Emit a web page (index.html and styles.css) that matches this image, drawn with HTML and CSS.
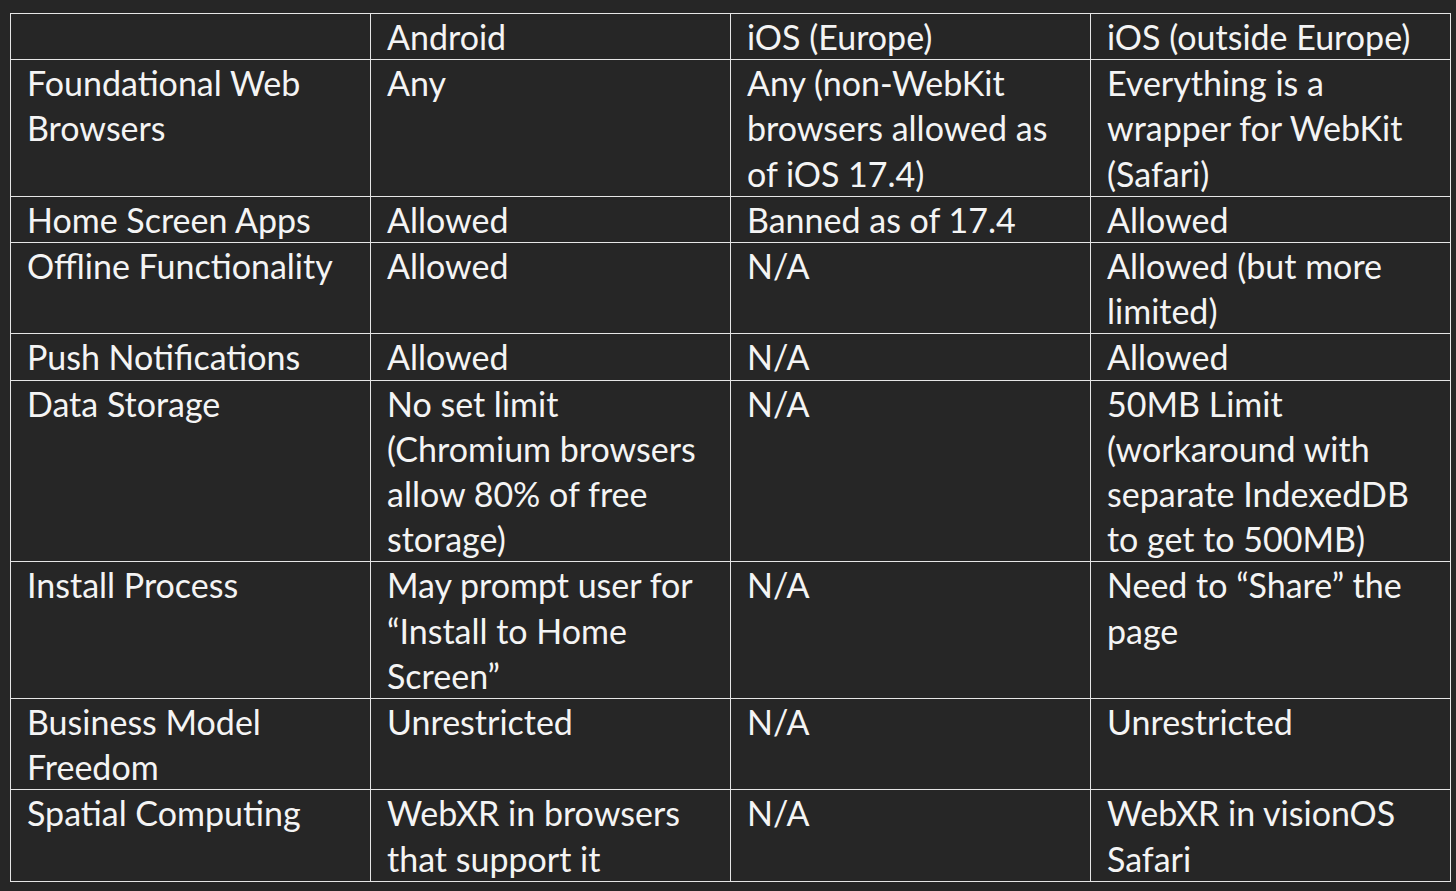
FILE: index.html
```html
<!DOCTYPE html>
<html lang="en">
<head>
<meta charset="utf-8">
<title>Web apps comparison</title>
<link rel="stylesheet" href="styles.css">
</head>
<body>
<table class="grid">
  <colgroup>
    <col class="c1"><col class="c2"><col class="c3"><col class="c4">
  </colgroup>
  <tr><td></td><td>Android</td><td>iOS (Europe)</td><td>iOS (outside Europe)</td></tr>
  <tr><td>Foundational Web Browsers</td><td>Any</td><td>Any (non-WebKit browsers allowed as of iOS 17.4)</td><td>Everything is a wrapper for WebKit (Safari)</td></tr>
  <tr><td>Home Screen Apps</td><td>Allowed</td><td>Banned as of 17.4</td><td>Allowed</td></tr>
  <tr><td>Offline Functionality</td><td>Allowed</td><td>N/A</td><td>Allowed (but more limited)</td></tr>
  <tr><td>Push Notifications</td><td>Allowed</td><td>N/A</td><td>Allowed</td></tr>
  <tr><td>Data Storage</td><td>No set limit (Chromium browsers allow 80% of free storage)</td><td>N/A</td><td>50MB Limit (workaround with separate IndexedDB to get to 500MB)</td></tr>
  <tr><td>Install Process</td><td>May prompt user for “Install to Home Screen”</td><td>N/A</td><td>Need to “Share” the page</td></tr>
  <tr><td>Business Model Freedom</td><td>Unrestricted</td><td>N/A</td><td>Unrestricted</td></tr>
  <tr><td>Spatial Computing</td><td>WebXR in browsers that support it</td><td>N/A</td><td>WebXR in visionOS Safari</td></tr>
</table>
</body>
</html>
```
FILE: styles.css
```css
html, body {
  margin: 0;
  background: #262626;
}
body {
  padding: 13px 6px 6px 10px;
}
.grid {
  border-collapse: collapse;
  width: 1440px;
  table-layout: fixed;
  font-family: Lato, "Open Sans", sans-serif;
  font-size: 34px;
  line-height: 45.2px;
  color: #f4f4f4;
  background: #262626;
}
.grid td {
  border: 1.5px solid #e6e6e6;
  padding: 0 16px;
  vertical-align: top;
}
.c1, .c2, .c3, .c4 { width: 360px; }
```
